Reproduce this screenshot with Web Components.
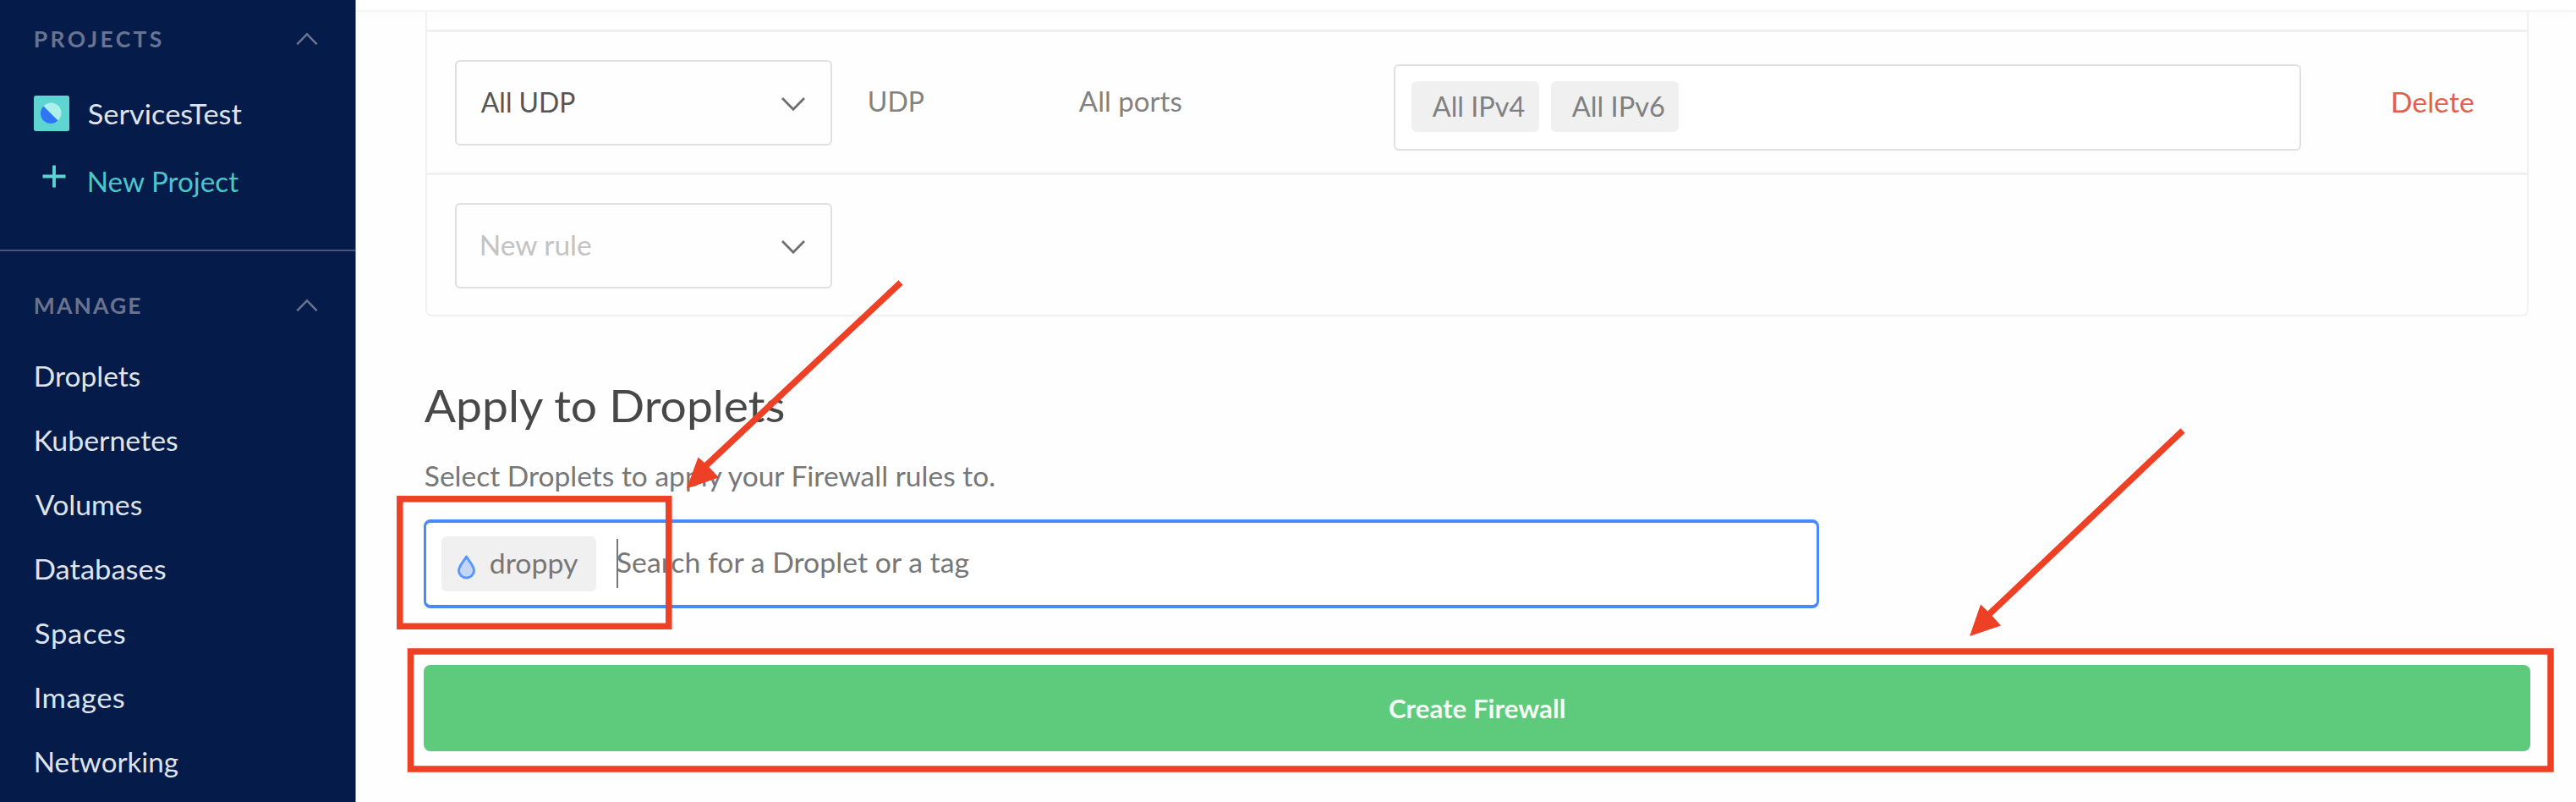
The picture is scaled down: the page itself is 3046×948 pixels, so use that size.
<!DOCTYPE html>
<html lang="en">
<head>
<meta charset="utf-8">
<title>Create Firewall</title>
<style>
  html, body { margin: 0; padding: 0; }
  body { width: 3046px; height: 948px; overflow: hidden; background: #fefefe; font-family: Lato, "Open Sans", sans-serif; }
</style>
</head>
<body>
<firewall-page></firewall-page>
<script>
const define = (name, html, setup) => {
  const tpl = document.createElement('template');
  tpl.innerHTML = html;
  customElements.define(name, class extends HTMLElement {
    connectedCallback() {
      if (this.shadowRoot) return;
      this.attachShadow({ mode: 'open' }).append(tpl.content.cloneNode(true));
      if (setup) setup(this, this.shadowRoot);
    }
  });
};

/* A label widened, then tracked, so that its glyphs span `span` pixels. */
const pen = document.createElement('canvas').getContext('2d');
define('ui-label', `<style>
  :host { display: block; width: max-content; white-space: pre; line-height: 40px; flex: none; transform-origin: left center; }
  :host([centered]) { transform-origin: center; }
</style><slot></slot>`, host => {
  const text = host.textContent;
  const size = host.getAttribute('size') || 32;
  const weight = host.getAttribute('weight') || 400;
  pen.font = `${weight} ${size}px Lato, "Open Sans", sans-serif`;
  const m = pen.measureText(text);
  const ink = m.actualBoundingBoxRight + m.actualBoundingBoxLeft;
  const span = Number(host.getAttribute('span'));
  const stretch = host.hasAttribute('tracked') ? 1 : Math.min(1.08, Math.max(.97, span / ink));
  const track = (span / stretch - ink) / (text.length - 1);
  host.style.fontSize = size + 'px';
  host.style.fontWeight = weight;
  host.style.letterSpacing = track.toFixed(3) + 'px';
  host.style.textIndent = (m.actualBoundingBoxLeft + .8).toFixed(2) + 'px';
  if (stretch !== 1) host.style.transform = `scaleX(${stretch.toFixed(4)})`;
});

define('ui-chevron', `<style>
  :host { display: block; flex: none; color: #6f6f6f; }
  :host([up]) { color: #69738f; }
  svg { display: block; }
</style><svg width="30" height="18" viewBox="0 0 30 18" fill="none" stroke="currentColor" stroke-width="2.8"><path d="M2 2l13 13.2L28 2"/></svg>`);

define('nav-heading', `<style>
  :host { display: flex; justify-content: space-between; align-items: center; height: 40px; padding: 0 42px 0 41px; color: #69738f; }
  ui-chevron { width: 30px; transform: scale(.9, -.9); }
</style><slot></slot><ui-chevron up></ui-chevron>`);

define('nav-item', `<style>
  :host { display: flex; align-items: flex-start; height: 76px; padding-left: 41px; color: #dfe3ec; }
</style><slot></slot>`);

define('project-item', `<style>
  :host { display: flex; align-items: flex-start; height: 42px; padding-left: 40px; color: #dfe3ec; }
  :host([accent]) { color: #4dc4c9; }
  .icon { width: 64px; flex: none; display: flex; }
</style><span class="icon"><slot name="icon"></slot></span><slot></slot>`);

define('side-nav', `<style>
  :host { display: block; height: 948px; background: #051b49; border-right: 1px solid #8088a8; box-sizing: border-box; overflow: hidden; }
  .projects { height: 295px; box-sizing: border-box; padding-top: 26px; }
  .manage { border-top: 2px solid #4c5479; padding-top: 44px; }
  .first { margin-top: 47px; }
  .second { margin-top: 38px; }
  .items { margin-top: 44px; }
  svg { display: block; }
  project-item ui-label { margin-top: 2px; }
</style>
<div class="projects">
  <nav-heading><ui-label tracked size="26.5" weight="700" span="149">PROJECTS</ui-label></nav-heading>
  <project-item class="first">
    <svg slot="icon" width="42" height="42" viewBox="0 0 42 42"><rect width="42" height="42" rx="2.5" fill="#5ed5d1"/><circle cx="20.5" cy="20.5" r="12" fill="#adefec"/><path d="M11.500 12.500A12 12 0 0 0 28.500 29.500Z" fill="#2f76f7"/></svg>
    <ui-label span="181.500">ServicesTest</ui-label>
  </project-item>
  <project-item accent class="second">
    <svg slot="icon" width="42" height="42" viewBox="0 0 42 42" stroke="#5bd6d3" stroke-width="3.8"><path d="M10.500 15.500h27M24 2.500v26"/></svg>
    <ui-label span="178.500">New Project</ui-label>
  </project-item>
</div>
<div class="manage">
  <nav-heading><ui-label tracked size="26.5" weight="700" span="124.500">MANAGE</ui-label></nav-heading>
  <div class="items">
    <nav-item><ui-label span="123.500">Droplets</ui-label></nav-item>
    <nav-item><ui-label span="168">Kubernetes</ui-label></nav-item>
    <nav-item><ui-label span="125.500">Volumes</ui-label></nav-item>
    <nav-item><ui-label span="154">Databases</ui-label></nav-item>
    <nav-item><ui-label span="106">Spaces</ui-label></nav-item>
    <nav-item><ui-label span="105">Images</ui-label></nav-item>
    <nav-item><ui-label span="168.500">Networking</ui-label></nav-item>
  </div>
</div>`);

define('ui-select', `<style>
  :host { display: flex; align-items: flex-start; justify-content: space-between; box-sizing: border-box; width: 446px; height: 101px; padding: 28px 29px 0 28px; border: 2px solid #e0e0e0; border-radius: 6px; color: #555; }
  :host([empty]) { color: #c3c3c3; }
  ui-chevron { margin-top: 13px; }
</style><slot></slot><ui-chevron></ui-chevron>`);

define('ui-tag', `<style>
  :host { display: flex; box-sizing: border-box; align-items: flex-start; background: #f0f0f0; border-radius: 6px; color: #808080; flex: none; }
</style><slot></slot>`);

define('tag-input', `<style>
  :host { display: flex; align-items: flex-start; box-sizing: border-box; border: 2px solid #e0e0e0; border-radius: 6px; background: #fff; }
  :host([focused]) { border: 4px solid #4a89f8; border-left-width: 3px; border-right-width: 3px; border-radius: 8px; }
</style><slot></slot>`);

define('rules-table', `<style>
  :host { display: block; box-sizing: border-box; width: 2487px; margin-left: 82px; border: 2px solid #f1f1f1; border-top: 0; border-radius: 0 0 8px 8px; }
  .stub { height: 21px; }
  .row { display: grid; grid-template-columns: 489px 248px 373px 1180px auto; align-items: start; box-sizing: border-box; border-top: 3px solid #f0f0f0; padding-left: 33px; height: 169px; color: #828282; }
  .row.last { height: 168px; }
  .row > * { margin-top: 62px; }
  .row > ui-select { margin-top: 33px; }
  .row > tag-input { margin-top: 38px; width: 1073px; height: 102px; padding: 18px 19px; gap: 14px; }
  ui-tag { width: 151px; height: 60px; padding: 10px 0 0 24px; }
  .row > .delete { margin-top: 63px; color: #e2604a; }
</style>
<div class="stub"></div>
<div class="row">
  <ui-select><ui-label span="111.500">All UDP</ui-label></ui-select>
  <ui-label span="65">UDP</ui-label>
  <ui-label span="121">All ports</ui-label>
  <tag-input>
    <ui-tag><ui-label span="109">All IPv4</ui-label></ui-tag>
    <ui-tag><ui-label span="109.500">All IPv6</ui-label></ui-tag>
  </tag-input>
  <ui-label class="delete" span="96">Delete</ui-label>
</div>
<div class="row last">
  <ui-select empty><ui-label span="130.500">New rule</ui-label></ui-select>
</div>`);

define('apply-section', `<style>
  :host { display: flex; flex-direction: column; align-items: flex-start; margin: 75px 0 0 80px; color: #777; }
  .title { line-height: 60px; color: #484848; }
  .hint { margin-top: 34px; margin-left: 1px; }
  tag-input { margin-top: 31px; width: 1650px; height: 105px; padding: 16px 18px; }
  ui-tag { width: 183px; height: 65px; padding: 12px 0 0 18px; color: #777; }
  ui-tag svg { display: block; margin: 9px 16px 0 0; }
  .caret { width: 2px; height: 58px; margin: 3px -2px 0 24px; background: #777; flex: none; }
  .placeholder { margin-top: 11px; }
</style>
<ui-label class="title" size="53" span="426">Apply to Droplets</ui-label>
<ui-label class="hint" span="675">Select Droplets to apply your Firewall rules to.</ui-label>
<tag-input focused>
  <ui-tag>
    <svg width="23" height="30" viewBox="0 0 23 30"><path d="M11.500 3C9 8 2.500 13.500 2.500 19.500a9 8.500 0 0 0 18 0C20.500 13.500 14 8 11.500 3Z" fill="#c3d6f5" stroke="#5b96fb" stroke-width="3" stroke-linejoin="round"/></svg>
    <ui-label span="104">droppy</ui-label>
  </ui-tag>
  <span class="caret"></span>
  <ui-label class="placeholder" span="417">Search for a Droplet or a tag</ui-label>
</tag-input>`);

define('primary-button', `<style>
  :host { display: flex; justify-content: center; align-items: flex-start; box-sizing: border-box; width: 2491px; height: 102px; margin: 67px 0 0 80px; padding-top: 32px; border-radius: 8px; background: #5dca7c; color: #f3fcf5; }
</style><slot></slot>`);

define('callout-layer', `<style>
  :host { position: absolute; left: 0; top: 0; width: 3046px; height: 948px; pointer-events: none; }
  svg { display: block; }
</style>
<svg width="3046" height="948" viewBox="0 0 3046 948" fill="none" stroke="#ee4025" stroke-width="7.500">
  <rect x="472.800" y="589.800" width="318" height="150.500"/>
  <rect x="485.500" y="770" width="2530.500" height="139"/>
  <path d="M1065 334L832 553M2581 509L2350 728"/>
  <g fill="#ee4025" stroke="none">
    <path d="M812 577.500L825.500 540.500L836 549.500L850 564.500Z"/>
    <path d="M2329 752L2342 714.500L2353 725L2366 739.500Z"/>
  </g>
</svg>`);

define('firewall-page', `<style>
  :host { display: grid; grid-template-columns: 421px 1fr; width: 3046px; height: 948px; position: relative; overflow: hidden; }
  main { display: flex; flex-direction: column; min-width: 0; }
  .topbar { height: 12px; background: #fff; border-bottom: 2px solid #f5f5f5; box-shadow: 0 3px 8px rgba(0,0,0,.015); }
</style>
<side-nav></side-nav>
<main>
  <div class="topbar"></div>
  <rules-table></rules-table>
  <apply-section></apply-section>
  <primary-button><ui-label centered size="29.5" weight="700" span="207">Create Firewall</ui-label></primary-button>
</main>
<callout-layer></callout-layer>`);
</script>
</body>
</html>
